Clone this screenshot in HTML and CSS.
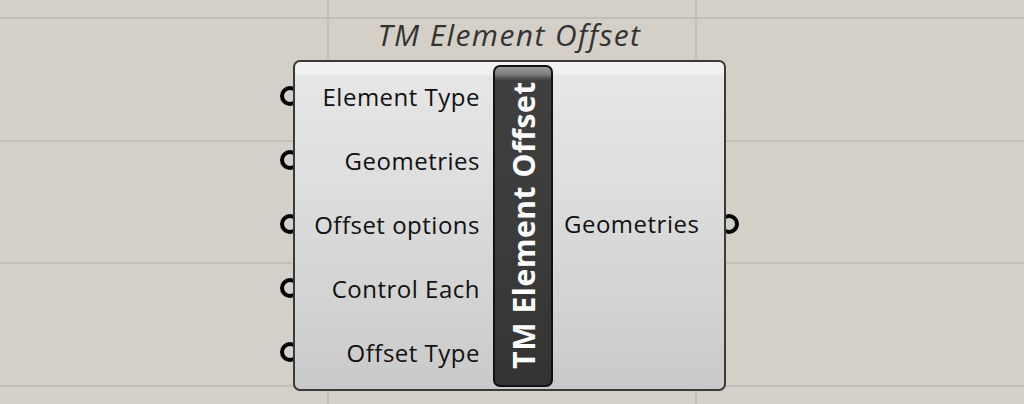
FILE: index.html
```html
<!DOCTYPE html>
<html>
<head>
<meta charset="utf-8">
<link rel="stylesheet" href="styles.css">
</head>
<body>
<div class="canvas">
  <div class="node">
    <div class="node-title">TM Element Offset</div>
    <div class="box">
      <div class="inputs">
        <div class="param"><span class="port port-in"></span>Element Type</div>
        <div class="param"><span class="port port-in"></span>Geometries</div>
        <div class="param"><span class="port port-in"></span>Offset options</div>
        <div class="param"><span class="port port-in"></span>Control Each</div>
        <div class="param"><span class="port port-in"></span>Offset Type</div>
      </div>
      <div class="namebar"><span class="namebar-text">TM Element Offset</span></div>
      <div class="outputs">
        <div class="param param-out"><span class="port port-out"></span>Geometries</div>
      </div>
    </div>
  </div>
</div>
</body>
</html>
```

FILE: styles.css
```css
html, body {
  margin: 0;
  padding: 0;
}

body {
  width: 1024px;
  height: 404px;
  overflow: hidden;
  font-family: "Open Sans", "Noto Sans", sans-serif;
}

.canvas {
  position: relative;
  z-index: 0;
  width: 1024px;
  height: 404px;
  background-color: #d4d0c8;
  background-image:
    linear-gradient(to right, transparent 327px, #c3bfb7 327px, #c3bfb7 329px, transparent 329px, transparent 695px, #c3bfb7 695px, #c3bfb7 697px, transparent 697px),
    linear-gradient(to bottom, transparent 17px, #c3bfb7 17px, #c3bfb7 19px, transparent 19px, transparent 140px, #c3bfb7 140px, #c3bfb7 142px, transparent 142px, transparent 262px, #c3bfb7 262px, #c3bfb7 264px, transparent 264px, transparent 385px, #c3bfb7 385px, #c3bfb7 387px, transparent 387px);
}

.node {
  position: absolute;
  left: 293px;
  top: 14px;
  width: 433px;
  display: flex;
  flex-direction: column;
  align-items: center;
}

.node-title {
  font-style: italic;
  font-size: 30px;
  line-height: 42px;
  letter-spacing: 1.4px;
  color: #333333;
  height: 46px;
}

.box {
  position: relative;
  box-sizing: border-box;
  width: 433px;
  height: 331px;
  border: 2px solid #3a3a3a;
  border-radius: 7px;
  background: linear-gradient(to bottom, #f2f2f2 0px, #f0f0f0 12px, #e6e6e6 14px, #dedede 120px, #d2d2d2 250px, #c9c9c9 100%);
  display: flex;
}

.inputs {
  width: 198px;
  padding-top: 2px;
  display: flex;
  flex-direction: column;
}

.param {
  position: relative;
  height: 64px;
  display: flex;
  align-items: center;
  justify-content: flex-end;
  padding-right: 13px;
  font-size: 24px;
  letter-spacing: 0.5px;
  color: #111111;
  white-space: nowrap;
}

.outputs {
  flex: 1;
  display: flex;
  flex-direction: column;
  justify-content: center;
  padding-bottom: 4px;
}

.param-out {
  justify-content: flex-start;
  padding-right: 0;
  padding-left: 11px;
}

.port {
  position: absolute;
  top: 50%;
  width: 20px;
  height: 20px;
  margin-top: -10px;
  box-sizing: border-box;
  border: 4px solid #000;
  border-radius: 50%;
  z-index: -1;
}

.port-in {
  left: -15px;
}

.port-out {
  right: -15px;
}

.namebar {
  box-sizing: border-box;
  width: 60px;
  margin: 3px 0 2px;
  border: 2px solid #111111;
  border-radius: 7px;
  background: linear-gradient(to bottom, #9a9a9a 0px, #7a7a7a 8px, #5a5a5a 10px, #3f3f3f 14px, #3c3c3c 50%, #333333 100%);
  display: flex;
  align-items: center;
  justify-content: center;
  overflow: hidden;
}

.namebar-text {
  writing-mode: vertical-rl;
  transform: rotate(180deg);
  font-weight: 700;
  font-size: 30px;
  letter-spacing: 0.6px;
  color: #ffffff;
  white-space: nowrap;
  padding-top: 2px;
}
```
